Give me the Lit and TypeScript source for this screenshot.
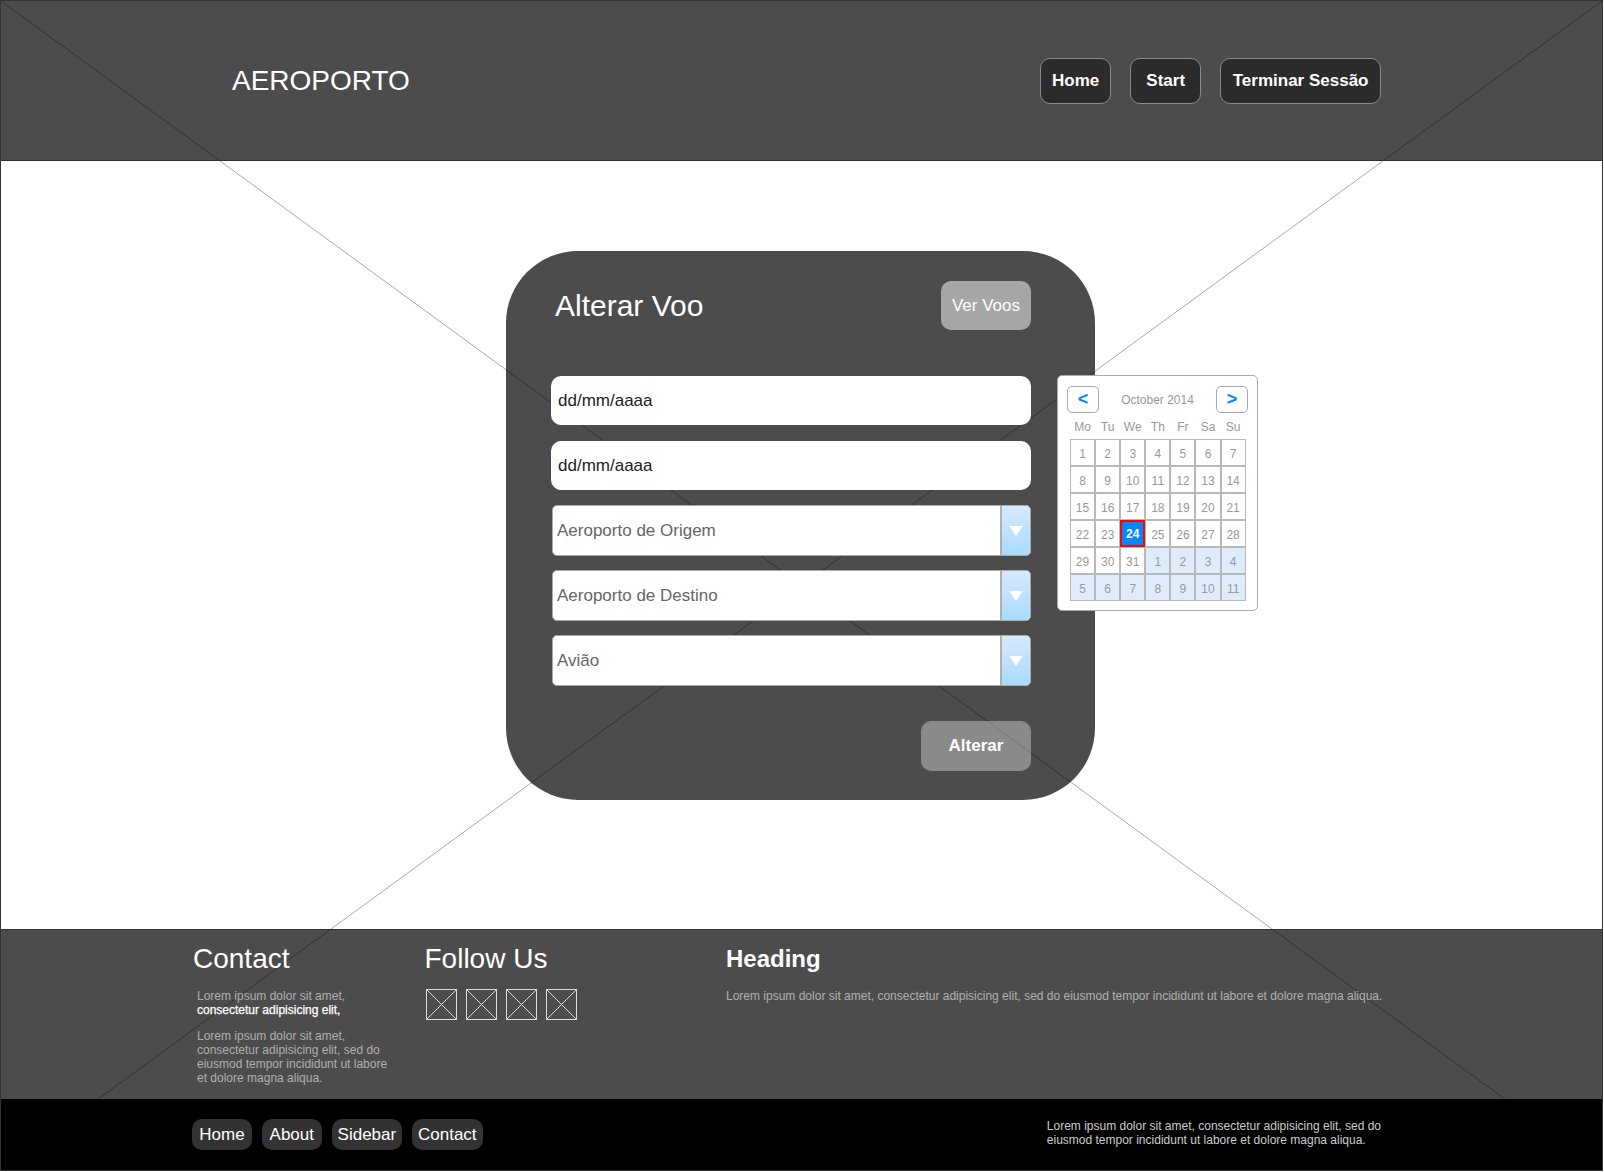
import { LitElement, html, css, svg } from "lit";
import { customElement } from "lit/decorators.js";
import { classMap } from "lit/directives/class-map.js";

const WEEKDAYS = ["Mo", "Tu", "We", "Th", "Fr", "Sa", "Su"];

// October 2014 starts on a Wednesday in real life, the mockup does not care
const DAYS: { n: number; other?: boolean; selected?: boolean }[] = [
  ...Array.from({ length: 31 }, (_, i) => ({ n: i + 1, selected: i + 1 === 24 })),
  ...Array.from({ length: 11 }, (_, i) => ({ n: i + 1, other: true })),
];

@customElement("calendar-popup")
export class CalendarPopup extends LitElement {
  static styles = css`
    :host {
      display: block;
      box-sizing: border-box;
      width: 201px;
      padding: 10px 9px 9px;
      background: #fff;
      border: 1px solid #aaa;
      border-radius: 5px;
      font-family: "Liberation Sans", Arial, sans-serif;
      font-size: 12px;
      color: #999;
    }

    .top {
      display: flex;
      justify-content: space-between;
      align-items: center;
      height: 27px;
    }

    .arrow {
      display: flex;
      align-items: center;
      justify-content: center;
      box-sizing: border-box;
      width: 32px;
      height: 27px;
      border: 1px solid #aaa;
      border-radius: 5px;
      color: #0088ff;
      font-size: 18px;
      font-weight: 700;
    }

    .week,
    .grid {
      display: grid;
      grid-template-columns: repeat(7, 25.1px);
      margin-left: 3px;
    }

    .week {
      box-sizing: border-box;
      height: 26px;
      padding-top: 1px;
      align-items: center;
      text-align: center;
    }

    .grid {
      grid-auto-rows: 27px;
    }

    .day {
      display: flex;
      align-items: center;
      justify-content: center;
      box-sizing: border-box;
      padding-top: 2px;
      border: 1px solid #b8b8b8;
    }

    .other {
      background: #deecfb;
    }

    .selected {
      background: #0088ff;
      border: 2px solid #f00;
      padding-top: 1px;
      color: #fff;
      font-weight: 700;
    }
  `;

  render() {
    return html`
      <div class="top">
        <div class="arrow">&lt;</div>
        <div>October 2014</div>
        <div class="arrow">&gt;</div>
      </div>
      <div class="week">${WEEKDAYS.map((d) => html`<div>${d}</div>`)}</div>
      <div class="grid">
        ${DAYS.map(
          (d) => html`<div class=${classMap({ day: true, other: !!d.other, selected: !!d.selected })}>${d.n}</div>`
        )}
      </div>
    `;
  }
}

@customElement("app-root")
export class AppRoot extends LitElement {
  static styles = css`
    :host {
      display: block;
      font-family: "Liberation Sans", Arial, sans-serif;
    }

    .frame {
      position: relative;
      isolation: isolate;
      display: flex;
      flex-direction: column;
      box-sizing: border-box;
      width: 1603px;
      height: 1171px;
      border: 1px solid #333;
      background: #fff;
    }

    .cross {
      position: absolute;
      inset: 0;
      width: 100%;
      height: 100%;
      z-index: -1;
    }

    .cross line {
      stroke: #aaa;
      stroke-width: 1;
    }

    header {
      display: flex;
      align-items: center;
      box-sizing: border-box;
      height: 160px;
      padding: 0 221px 0 231px;
      background: rgba(0, 0, 0, 0.7);
      border-bottom: 1px solid #333;
    }

    h1 {
      margin: 0;
      font-size: 28px;
      font-weight: 400;
      color: #fff;
    }

    .top-nav {
      display: flex;
      gap: 19px;
      margin-left: auto;
    }

    .top-nav a {
      display: flex;
      align-items: center;
      justify-content: center;
      box-sizing: border-box;
      min-width: 71px;
      height: 46px;
      padding: 0 11px;
      background: #2b2b2b;
      border: 1px solid #8a8a8a;
      border-radius: 10px;
      color: #fff;
      font-size: 17px;
      font-weight: 700;
    }

    .top-nav a.wide {
      padding: 0 11.5px;
    }

    main {
      flex: 1;
      padding: 90px 0 0 505px;
    }

    .card {
      position: relative;
      box-sizing: border-box;
      width: 589px;
      height: 549px;
      padding: 30px 64px 30px 45px;
      background: rgba(0, 0, 0, 0.7);
      border-radius: 72px;
    }

    .card-top {
      display: flex;
      justify-content: space-between;
      align-items: center;
      height: 49px;
    }

    h2 {
      margin: 0 0 0 4px;
      font-size: 30px;
      font-weight: 400;
      color: #fff;
    }

    .btn {
      display: flex;
      align-items: center;
      justify-content: center;
      box-sizing: border-box;
      height: 49px;
      border-radius: 10px;
      color: #fff;
      font-size: 17px;
    }

    .see {
      width: 90px;
      background: rgba(255, 255, 255, 0.5);
    }

    .fields {
      display: flex;
      flex-direction: column;
      margin-top: 46px;
    }

    input {
      display: block;
      box-sizing: border-box;
      width: 100%;
      height: 49px;
      margin: 0 0 16px;
      padding: 0 7px;
      background: #fff;
      border: 0;
      border-radius: 10px;
      font-family: inherit;
      font-size: 17px;
    }

    input + input {
      margin-bottom: 15px;
    }

    input::placeholder {
      color: #222;
      opacity: 1;
    }

    .select {
      display: flex;
      align-items: center;
      box-sizing: border-box;
      height: 51px;
      margin: 0 0 14px 1px;
      padding-left: 4px;
      background: #fff;
      border: 1px solid #aaa;
      border-radius: 5px;
      color: #666;
      font-size: 17px;
      overflow: hidden;
    }

    .select:last-child {
      margin-bottom: 0;
    }

    .select span {
      flex: 1;
    }

    .caret {
      display: flex;
      align-items: center;
      justify-content: center;
      box-sizing: border-box;
      width: 30px;
      height: 100%;
      background: linear-gradient(#d7e9fb, #a9dbff);
      border-left: 2px solid #b0b0b0;
    }

    .actions {
      display: flex;
      justify-content: flex-end;
      margin-top: 35px;
    }

    .change {
      width: 110px;
      height: 50px;
      background: rgba(255, 255, 255, 0.35);
      font-weight: 700;
    }

    calendar-popup {
      position: absolute;
      left: 551px;
      top: 124px;
    }

    .foot {
      display: flex;
      box-sizing: border-box;
      height: 170px;
      padding: 13px 0 0 192px;
      background: rgba(0, 0, 0, 0.7);
      border-top: 1px solid #333;
      color: #fff;
    }

    .foot h3 {
      margin: 0 0 14px;
      font-size: 28px;
      line-height: 32px;
      font-weight: 400;
    }

    .foot h3.strong {
      font-size: 24px;
      font-weight: 700;
    }

    .foot p {
      margin: 0 0 12px;
      font-size: 12px;
      line-height: 14px;
      color: #b0b0b0;
    }

    .foot p b {
      font-weight: 400;
      color: #fff;
      -webkit-text-stroke: 0.25px #fff;
    }

    .contact {
      width: 231.5px;
    }

    .contact p {
      width: 195px;
      margin-left: 4px;
    }

    .follow {
      width: 301.5px;
    }

    .social {
      display: flex;
      gap: 9px;
      margin-left: 1px;
    }

    .social svg {
      display: block;
      width: 31px;
      height: 31px;
      stroke: #ddd;
      fill: none;
    }

    .bottom {
      display: flex;
      box-sizing: border-box;
      height: 71px;
      padding: 20px 221px 0 191px;
      background: #000;
    }

    .bottom-nav {
      display: flex;
      gap: 9.8px;
      height: 31px;
    }

    .bottom-nav a {
      display: flex;
      align-items: center;
      justify-content: center;
      box-sizing: border-box;
      min-width: 60px;
      padding: 0 6px;
      background: #333;
      border-radius: 10px;
      color: #fff;
      font-size: 17px;
    }

    .legal {
      margin: 0 0 0 auto;
      font-size: 12px;
      line-height: 14px;
      color: #ccc;
      white-space: nowrap;
    }
  `;

  private select(label: string) {
    return html`
      <div class="select">
        <span>${label}</span>
        <div class="caret">
          <svg width="14" height="10" viewBox="0 0 14 10"><path d="M0 0H14L7 10Z" fill="#fff" /></svg>
        </div>
      </div>
    `;
  }

  private socialIcon() {
    return svg`
      <svg viewBox="0 0 31 31">
        <rect x="0.5" y="0.5" width="30" height="30" />
        <path d="M1 1L30 30M30 1L1 30" />
      </svg>
    `;
  }

  render() {
    return html`
      <div class="frame">
        <svg class="cross">
          <line x1="0" y1="0" x2="100%" y2="100%" />
          <line x1="100%" y1="0" x2="0" y2="100%" />
        </svg>

        <header>
          <h1>AEROPORTO</h1>
          <nav class="top-nav">
            <a>Home</a>
            <a>Start</a>
            <a class="wide">Terminar Sessão</a>
          </nav>
        </header>

        <main>
          <section class="card">
            <div class="card-top">
              <h2>Alterar Voo</h2>
              <a class="btn see">Ver Voos</a>
            </div>
            <div class="fields">
              <input type="text" placeholder="dd/mm/aaaa" />
              <input type="text" placeholder="dd/mm/aaaa" />
              ${this.select("Aeroporto de Origem")}
              ${this.select("Aeroporto de Destino")}
              ${this.select("Avião")}
            </div>
            <div class="actions">
              <a class="btn change">Alterar</a>
            </div>
            <calendar-popup></calendar-popup>
          </section>
        </main>

        <footer class="foot">
          <div class="contact">
            <h3>Contact</h3>
            <p>Lorem ipsum dolor sit amet,<br /><b>consectetur adipisicing elit,</b></p>
            <p>Lorem ipsum dolor sit amet, consectetur adipisicing elit, sed do eiusmod tempor incididunt ut labore et dolore magna aliqua.</p>
          </div>
          <div class="follow">
            <h3>Follow Us</h3>
            <div class="social">
              ${[0, 1, 2, 3].map(() => this.socialIcon())}
            </div>
          </div>
          <div>
            <h3 class="strong">Heading</h3>
            <p>Lorem ipsum dolor sit amet, consectetur adipisicing elit, sed do eiusmod tempor incididunt ut labore et dolore magna aliqua.</p>
          </div>
        </footer>

        <footer class="bottom">
          <nav class="bottom-nav">
            <a>Home</a>
            <a>About</a>
            <a>Sidebar</a>
            <a>Contact</a>
          </nav>
          <p class="legal">Lorem ipsum dolor sit amet, consectetur adipisicing elit, sed do<br />eiusmod tempor incididunt ut labore et dolore magna aliqua.</p>
        </footer>
      </div>
    `;
  }
}
